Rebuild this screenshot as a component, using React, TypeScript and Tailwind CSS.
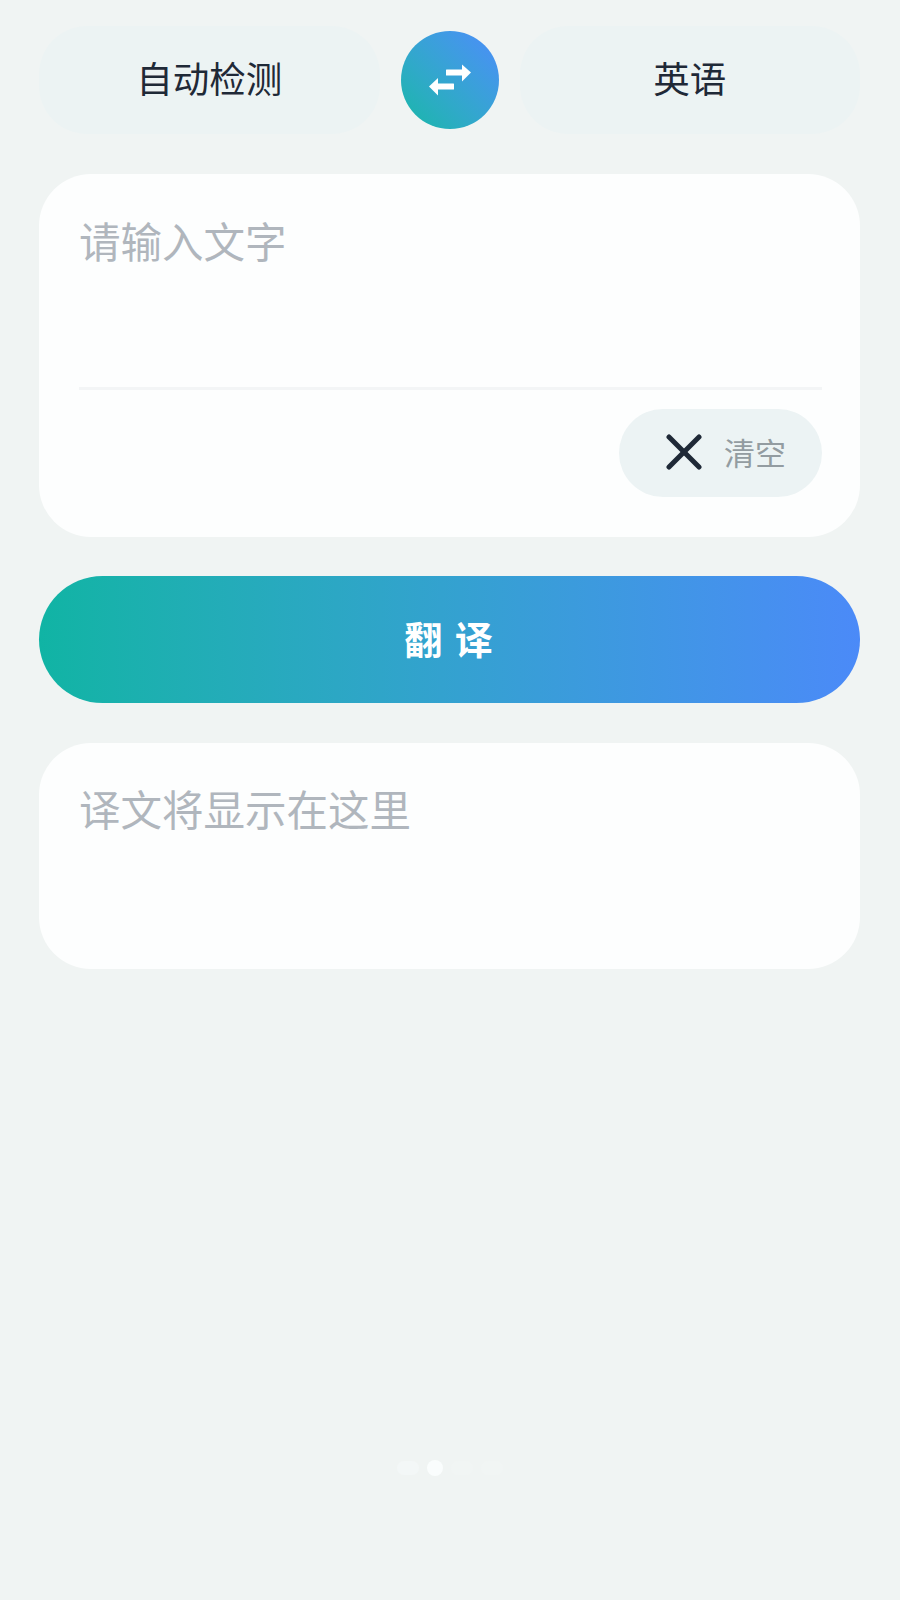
import React from 'react';

const cjk = "font-['Noto_Sans_CJK_SC','Noto_Sans',sans-serif]";

function SwapIcon() {
  return (
    <svg width="44" height="32" viewBox="0 0 44 32" fill="#ffffff" aria-hidden="true">
      {/* right arrow */}
      <rect x="18" y="5.5" width="18" height="6" rx="0.5" />
      <polygon points="34,0.5 43,8.5 34,17.5" />
      {/* left arrow */}
      <rect x="8" y="19.5" width="18" height="6" rx="0.5" />
      <polygon points="10,14 1,22.5 10,31.5" />
    </svg>
  );
}

function LangPill({ label }: { label: string }) {
  return (
    <button className="flex h-[108px] flex-1 items-center justify-center rounded-[48px] bg-[#ecf3f3] pb-[4px] text-[36.5px] text-[#1f2937]">
      {label}
    </button>
  );
}

export default function App() {
  return (
    <div className={`${cjk} flex min-h-[1600px] w-full flex-col bg-[#f0f4f3] pl-[39px] pr-[40px] pt-[26px]`}>
      {/* language row */}
      <div className="flex items-center gap-[21px]">
        <LangPill label="自动检测" />
        <button className="flex h-[98px] w-[98px] items-center justify-center rounded-full bg-linear-to-tr from-[#14b8a6] to-[#4d8bfb]">
          <SwapIcon />
        </button>
        <LangPill label="英语" />
      </div>

      {/* input card */}
      <div className="mt-[40px] rounded-[52px] bg-[#fdfefe] pb-[40px] pl-[40px] pr-[38px] pt-[38px]">
        <div className="h-[175px] text-[41.5px] leading-[56px] text-[#b0b6bd]">请输入文字</div>
        <div className="h-[3px] bg-[#f3f5f6]" />
        <div className="mt-[19px] flex justify-end">
          <button className="flex h-[88px] w-[203px] items-center gap-[22px] rounded-full bg-[#ecf3f4] pb-[2px] pl-[47px]">
            <svg width="36" height="36" viewBox="0 0 36 36" fill="none" stroke="#1f2937" strokeWidth="5" strokeLinecap="round" aria-hidden="true">
              <path d="M3 3 L33 33" />
              <path d="M33 3 L3 33" />
            </svg>
            <span className="text-[31px] text-[#939ca1]">清空</span>
          </button>
        </div>
      </div>

      {/* translate button */}
      <button className="mt-[39px] flex h-[127px] w-full items-center justify-center rounded-full bg-linear-to-r from-[#10b4a4] to-[#4b8af8] pb-[4px] text-[38px] font-bold tracking-[2px] text-white">
        翻 译
      </button>

      {/* result card */}
      <div className="mt-[40px] h-[226px] rounded-[52px] bg-[#fdfefe] px-[40px] pt-[37px] text-[41.5px] leading-[56px] text-[#b0b6bd]">
        译文将显示在这里
      </div>

      {/* page dots */}
      <div className="mb-[124px] mt-auto flex items-center justify-center gap-[8px]">
        <div className="h-[14px] w-[22px] rounded-full bg-[#f3f7f7]" />
        <div className="h-[16px] w-[16px] rounded-full bg-[#fafdfd]" />
        <div className="h-[14px] w-[22px] rounded-full bg-[#f1f5f4]" />
        <div className="h-[14px] w-[22px] rounded-full bg-[#f1f5f4]" />
      </div>
    </div>
  );
}
